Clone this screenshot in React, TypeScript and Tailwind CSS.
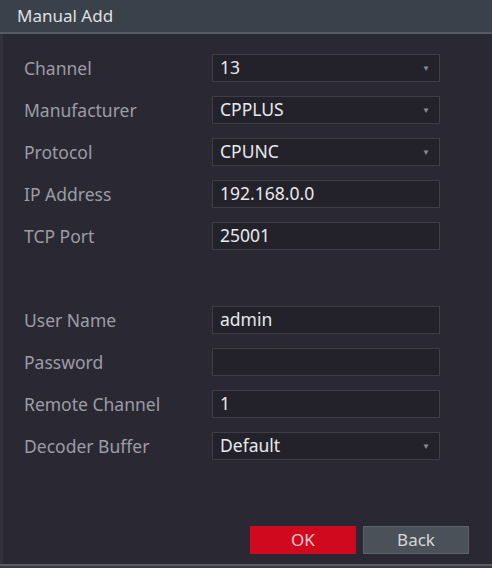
import { ReactNode } from "react";

type Row = { label: string; value?: string; select?: boolean } | null;

const rows: Row[] = [
  { label: "Channel", value: "13", select: true },
  { label: "Manufacturer", value: "CPPLUS", select: true },
  { label: "Protocol", value: "CPUNC", select: true },
  { label: "IP Address", value: "192.168.0.0" },
  { label: "TCP Port", value: "25001" },
  null,
  { label: "User Name", value: "admin" },
  { label: "Password", value: "" },
  { label: "Remote Channel", value: "1" },
  { label: "Decoder Buffer", value: "Default", select: true },
];

const Field = ({ value, select }: { value?: string; select?: boolean }) => (
  <div className="h-[28px] border border-[#3d3c47] bg-[#23222b] flex items-center pl-[7px] pr-[9px]">
    <span className="flex-1 text-[17.5px] text-[#e9e9ec] leading-none">{value}</span>
    {select && <span className="text-[8px] text-[#8a8a92] leading-none">▼</span>}
  </div>
);

const Label = ({ children }: { children: ReactNode }) => (
  <div className="h-[28px] flex items-center text-[17.5px] text-[#9d9ca6]">{children}</div>
);

export default function App() {
  return (
    <div
      className="w-[492px] h-[568px] flex flex-col bg-[#2a2933] overflow-hidden"
      style={{ fontFamily: '"Noto Sans", "Open Sans", sans-serif' }}
    >
      <div className="h-[34px] shrink-0 bg-[#3b414a] border-b-2 border-[#555c66] flex items-center px-[17px] text-[17px] text-[#dfe0e3]">
        Manual Add
      </div>

      <div className="flex-1 flex flex-col border-l-[3px] border-[#32323c] pt-[20px]">
        <div className="grid grid-cols-[188px_228px] gap-y-[14px] pl-[21px]">
          {rows.map((r, i) =>
            r ? (
              <div key={i} className="contents">
                <Label>{r.label}</Label>
                <Field value={r.value} select={r.select} />
              </div>
            ) : (
              <div key={i} className="col-span-2 h-[28px]" />
            )
          )}
        </div>

        <div className="mt-auto flex justify-end gap-[7px] pr-[23px] pb-[10px]">
          <button className="w-[106px] h-[28px] bg-[#d0091f] text-[#f6c9cf] text-[17px]">OK</button>
          <button className="w-[106px] h-[28px] bg-[#4a5158] border border-[#5a6168] text-[#d5d8dc] text-[17px]">
            Back
          </button>
        </div>
      </div>

      <div className="h-[4px] shrink-0 border-t-2 border-[#5b5c63] bg-[#3a3a42]" />
    </div>
  );
}
